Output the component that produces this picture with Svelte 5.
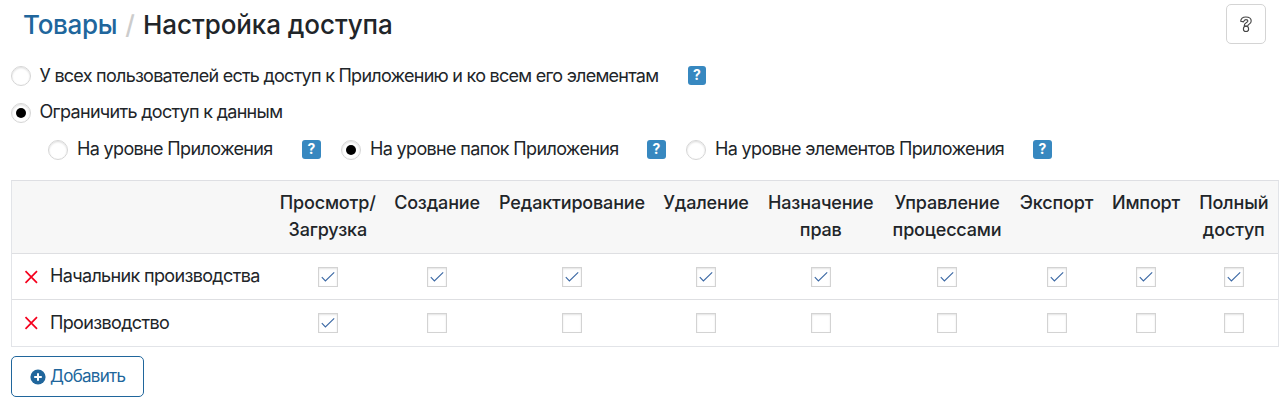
<script>
  const levels = [
    { text: 'На уровне Приложения', on: false, width: 225 },
    { text: 'На уровне папок Приложения', on: true, width: 277 },
    { text: 'На уровне элементов Приложения', on: false, width: 318 },
  ];
  const columns = [
    ['Просмотр/', 'Загрузка'],
    ['Создание'],
    ['Редактирование'],
    ['Удаление'],
    ['Назначение', 'прав'],
    ['Управление', 'процессами'],
    ['Экспорт'],
    ['Импорт'],
    ['Полный', 'доступ'],
  ];
  const rows = [
    { name: 'Начальник производства', rights: columns.map(() => true) },
    { name: 'Производство', rights: columns.map((_, i) => i === 0) },
  ];
</script>

{#snippet radio(on)}
  <span class="radio" class:on></span>
{/snippet}

<div class="page">
  <header>
    <h1><a href="#top">Товары</a><span class="slash">/</span><span class="current">Настройка доступа</span></h1>
    <button class="help" aria-label="Справка">
      <svg width="14" height="18" viewBox="0 0 14 18" fill="none" stroke="#444" stroke-width="1.1">
        <path d="M1.7 6.3C1.9 3.3 4 2 6.8 2C9.8 2 12.2 3.4 12.2 6C12.2 9.2 8.9 9 8.8 11H5.2C5 7.5 8.9 7.7 8.9 6C8.9 5 8 4.6 6.9 4.6C5.5 4.6 5 5.4 4.5 6.9Z" stroke-linejoin="round" />
        <circle cx="7" cy="13.9" r="2.6" />
      </svg>
    </button>
  </header>

  <div class="option first">
    {@render radio(false)}
    <span class="label all">У всех пользователей есть доступ к Приложению и ко всем его элементам</span>
    <span class="hint">?</span>
  </div>
  <div class="option second">
    {@render radio(true)}
    <span class="label">Ограничить доступ к данным</span>
  </div>
  <div class="option levels">
    {#each levels as level}
      <div class="level">
        {@render radio(level.on)}
        <span class="label" style:width="{level.width}px">{level.text}</span>
        <span class="hint">?</span>
      </div>
    {/each}
  </div>

  <div class="table">
    <div class="row head">
      <div></div>
      {#each columns as lines}
        <div class="th">{#each lines as line}<span>{line}</span>{/each}</div>
      {/each}
    </div>
    {#each rows as row}
      <div class="row">
        <div class="name">
          <svg width="14" height="14" viewBox="0 0 14 14" stroke="#f5001d" stroke-width="1.7"><path d="M1.5 1.2L13 12.8M13 1.2L1.5 12.8" /></svg>
          <span>{row.name}</span>
        </div>
        {#each row.rights as on}
          <div class="cell">
            <span class="check">
              {#if on}
                <svg width="18" height="18" viewBox="0 0 18 18" fill="none" stroke="#3c69a5" stroke-width="1.15"><path d="M2.8 9.2L6.4 12.9L15.2 4.4" /></svg>
              {/if}
            </span>
          </div>
        {/each}
      </div>
    {/each}
  </div>

  <button class="add">
    <svg width="16" height="16" viewBox="0 0 16 16"><circle cx="8" cy="8" r="7.6" fill="#20669c" /><path d="M8 4.2V11.8M4.2 8H11.8" stroke="#fff" stroke-width="2" /></svg>
    <span>Добавить</span>
  </button>
</div>

<style>
  :global(body) { background: #fff; }
  .page {
    box-sizing: border-box;
    height: 403px;
    padding: 4px 9px 0 11px;
    font-family: Inter, 'Liberation Sans', sans-serif;
    font-size: 18px;
    letter-spacing: -0.65px;
    color: #212529;
    overflow: hidden;
  }
  header { display: flex; justify-content: space-between; padding: 0 13px 0 12px; height: 40px; }
  h1 { margin: 0; font-size: 26px; line-height: 41px; font-weight: 550; letter-spacing: -0.3px; white-space: nowrap; }
  a { color: #20669c; text-decoration: none; }
  .slash { color: #ccc; margin: 0 8.5px 0 8px; }
  .current { letter-spacing: -0.08px; }
  button { font: inherit; letter-spacing: inherit; background: #fff; padding: 0; }
  .help { box-sizing: border-box; width: 40px; height: 40px; border: 1px solid #d4d4d4; border-radius: 5px; display: flex; align-items: center; justify-content: center; }
  .option { display: flex; height: 20px; line-height: 20px; }
  .first { margin-top: 22px; }
  .second { margin-top: 17px; }
  .second .label { letter-spacing: -0.69px; }
  .levels { margin-top: 17px; padding-left: 37px; gap: 20px; }
  .level { display: flex; }
  .label { margin: -1px 0 0 9px; white-space: nowrap; }
  .all { margin-top: 0; width: 648px; letter-spacing: -0.74px; }
  .first .label, .second .label { text-indent: -0.5px; }
  .radio { box-sizing: border-box; width: 20px; height: 20px; flex: none; border: 1px solid #d6d6d6; border-radius: 50%; box-shadow: inset 0 1px 2px #ddd; display: flex; align-items: center; justify-content: center; }
  .on::after { content: ''; width: 10px; height: 10px; border-radius: 50%; background: #000; }
  .hint { width: 19px; height: 19px; flex: none; border-radius: 3px; background: #3788c0; color: #fff; font-size: 14px; letter-spacing: 0; font-weight: 700; line-height: 18px; text-align: center; }
  .first .hint { width: 18px; }
  .table { margin-top: 20px; border: 1px solid #e2e4e8; border-top-color: #dedfe3; }
  .row { display: grid; grid-template-columns: 259.5px 112.5px 106px 164px 104px 125.5px 127px 92px 87px 88.5px; height: 45px; border-top: 1px solid #dedfe2; }
  .row:last-child { height: 46px; }
  .head { height: 72px; border-top: 0; background: #f7f7f7; }
  .th { display: flex; flex-direction: column; align-items: center; padding-top: 8px; line-height: 27px; font-weight: 530; letter-spacing: -0.17px; white-space: nowrap; }
  .name { display: flex; align-items: center; padding-left: 12px; }
  .name span { margin-left: 12px; position: relative; top: -1px; white-space: nowrap; }
  .cell { display: flex; justify-content: center; align-items: center; }
  .check { box-sizing: border-box; width: 20px; height: 20px; border: 1px solid #d3d3d3; box-shadow: inset 0 1px 2px #e3e3e3; }
  .check svg { display: block; }
  .add { box-sizing: border-box; width: 133px; height: 41px; margin-top: 9px; border: 1px solid #20669c; border-radius: 5px; color: #20669c; display: flex; align-items: center; padding-left: 18px; gap: 4px; font-size: 17px; letter-spacing: -0.72px; }
  .add span { margin-top: -1px; }
</style>
